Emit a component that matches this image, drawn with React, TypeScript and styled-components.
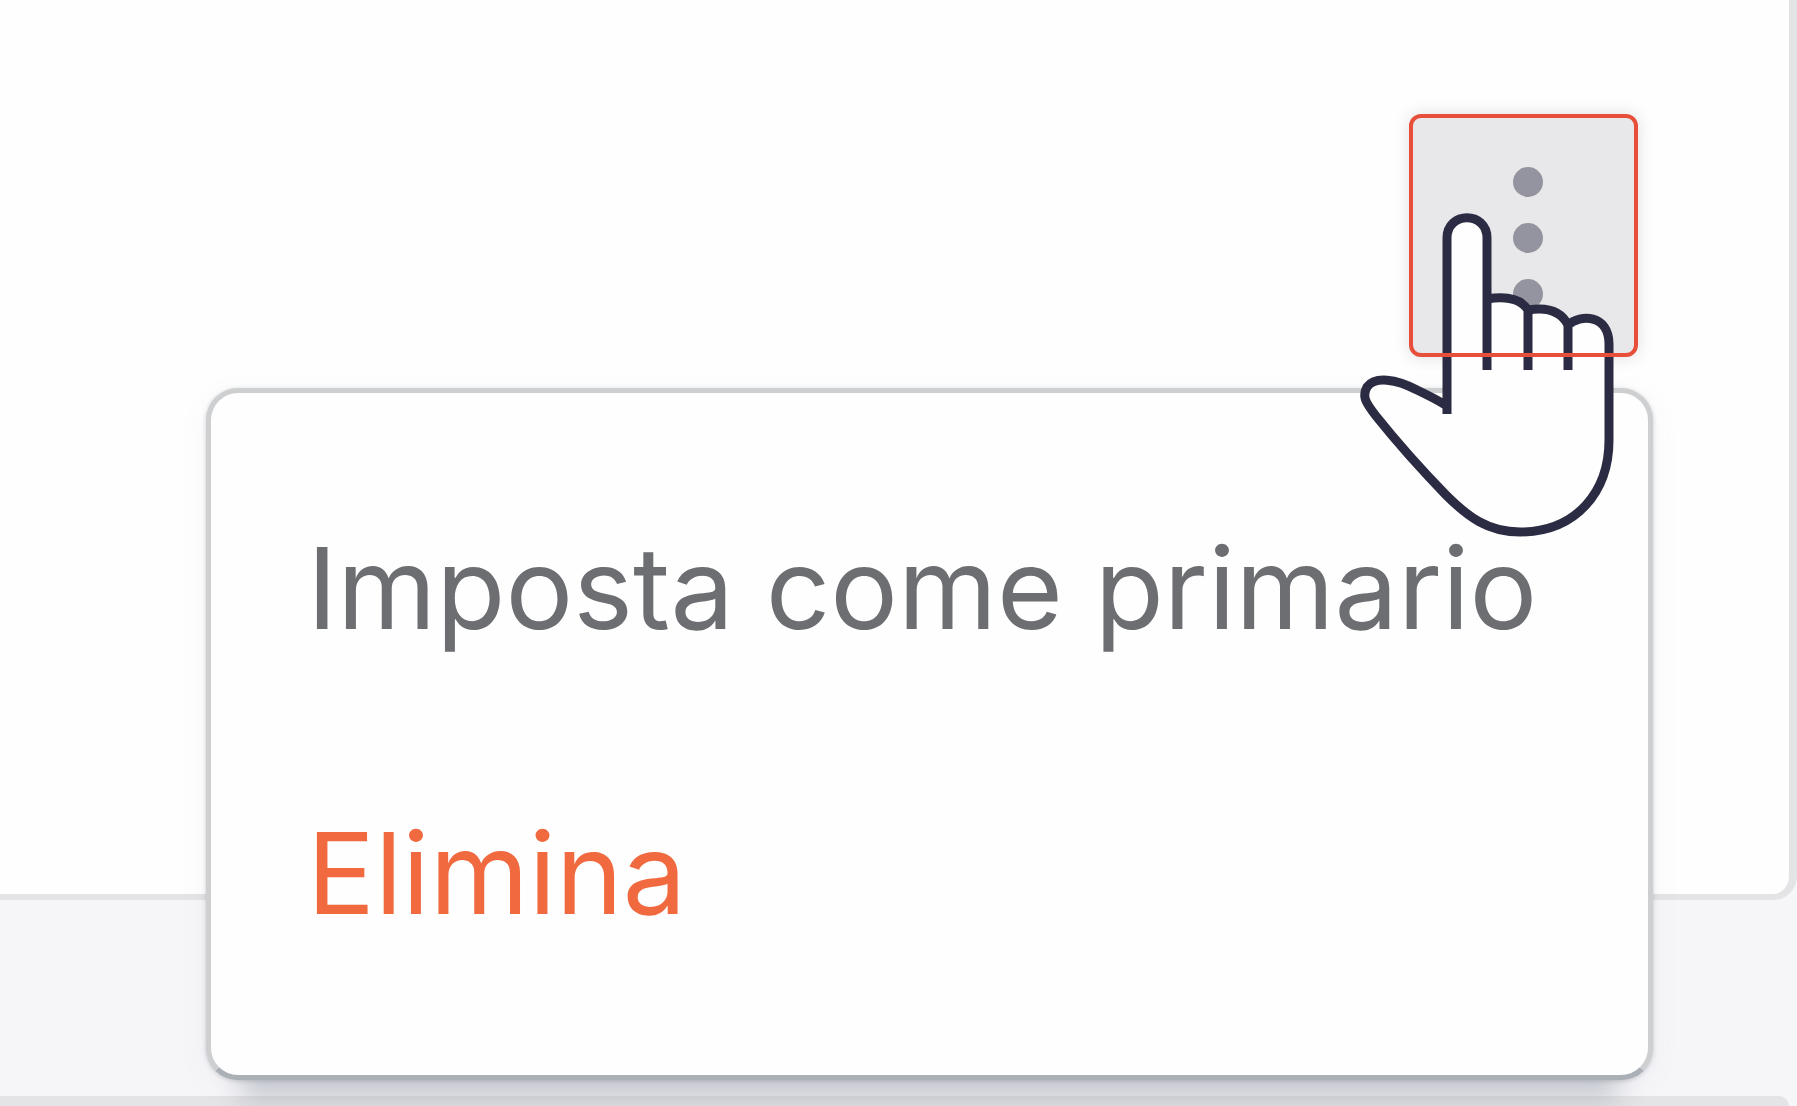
import React from "react";
import styled, { createGlobalStyle } from "styled-components";

const GlobalStyle = createGlobalStyle`
  *, *::before, *::after { box-sizing: border-box; }
  body {
    margin: 0;
    background: #f6f6f9;
    font-family: Inter, "Liberation Sans", sans-serif;
  }
`;

const Page = styled.main`
  display: flex;
  flex-direction: column;
  gap: 196px;
  height: 100vh;
  overflow: hidden;
`;

const Card = styled.section`
  display: flex;
  flex: none;
  justify-content: flex-end;
  align-items: flex-start;
  min-height: 900px;
  padding: 114px 151px 0 0;
  background: #fefefe;
  border: solid #e4e4e6;
  border-width: 0 8px 6px 0;
  border-bottom-right-radius: 24px;
`;

const NextCard = styled.section`
  flex: 1;
  margin-right: 8px;
  background: #fefefe;
  border-top: 10px solid #e4e4e6;
  border-top-right-radius: 24px;
`;

const MenuAnchor = styled.div`
  position: relative;
`;

const Trigger = styled.button`
  display: block;
  width: 229px;
  height: 243px;
  padding: 0;
  border: 0;
  border-radius: 12px;
  background: #e8e8ea;
  box-shadow: 0 0 16px rgba(60, 60, 70, 0.16);
  cursor: pointer;

  svg {
    display: block;
  }
`;

const FocusRing = styled.span`
  position: absolute;
  inset: 0;
  border: 4px solid #e74f3b;
  border-radius: 12px;
  pointer-events: none;
`;

const Pointer = styled.svg`
  position: absolute;
  top: 94px;
  left: -59px;
  pointer-events: none;
`;

const Menu = styled.div`
  position: absolute;
  top: 274px;
  right: -15px;
  display: flex;
  flex-direction: column;
  gap: 125px;
  width: 1447px;
  padding: 115px 96px 122px;
  background: #fefefe;
  border: 5px solid #cdcfd1;
  border-bottom-color: #abafb6;
  border-radius: 32px;
  box-shadow: 0 1px 4px rgba(90, 95, 105, 0.3),
    0 56px 24px -36px rgba(110, 116, 132, 0.3),
    0 8px 32px rgba(90, 90, 120, 0.05);
`;

const MenuItem = styled.button<{ $danger?: boolean }>`
  padding: 0;
  border: 0;
  background: none;
  color: ${(p) => (p.$danger ? "#f0693f" : "#6c6e71")};
  font: 400 113px/160px Inter, "Liberation Sans", sans-serif;
  text-align: left;
  white-space: nowrap;
  cursor: pointer;
`;

export default function App() {
  return (
    <>
      <GlobalStyle />
      <Page>
        <Card>
          <MenuAnchor>
            <Trigger type="button" aria-label="Azioni" aria-haspopup="menu" aria-expanded="true">
              <svg width="229" height="243" viewBox="0 0 229 243" fill="#93949f" aria-hidden="true">
                <circle cx="119" cy="68" r="15" />
                <circle cx="119" cy="124" r="15" />
                <circle cx="119" cy="180" r="15" />
              </svg>
            </Trigger>
            <Menu role="menu">
              <MenuItem type="button" role="menuitem">Imposta come primario</MenuItem>
              <MenuItem type="button" role="menuitem" $danger>Elimina</MenuItem>
            </Menu>
            <Pointer width="280" height="340" viewBox="1350 208 280 340" aria-hidden="true">
              <path
                d="M1447 414V238C1447 211 1487 211 1487 238V299Q1518 294 1528 310Q1558 305 1568 325C1580 314 1609 314 1609 344V440C1609 492 1576 532 1520 532C1488 532 1468 517 1446 495C1414 462 1396 441 1376 416C1365 402 1362 396 1367 387C1375 376 1396 379 1417 390Q1436 399 1447 408Z"
                fill="#fefefe"
              />
              <path
                d="M1447 414V238C1447 211 1487 211 1487 238V370M1487 299Q1518 294 1528 310V370M1528 310Q1558 305 1568 325V370M1568 325C1580 314 1609 314 1609 344V440C1609 492 1576 532 1520 532C1488 532 1468 517 1446 495C1414 462 1396 441 1376 416C1365 402 1362 396 1367 387C1375 376 1396 379 1417 390Q1436 399 1447 406"
                fill="none"
                stroke="#2b2c43"
                strokeWidth="9"
                strokeLinejoin="round"
              />
            </Pointer>
            <FocusRing />
          </MenuAnchor>
        </Card>
        <NextCard />
      </Page>
    </>
  );
}
